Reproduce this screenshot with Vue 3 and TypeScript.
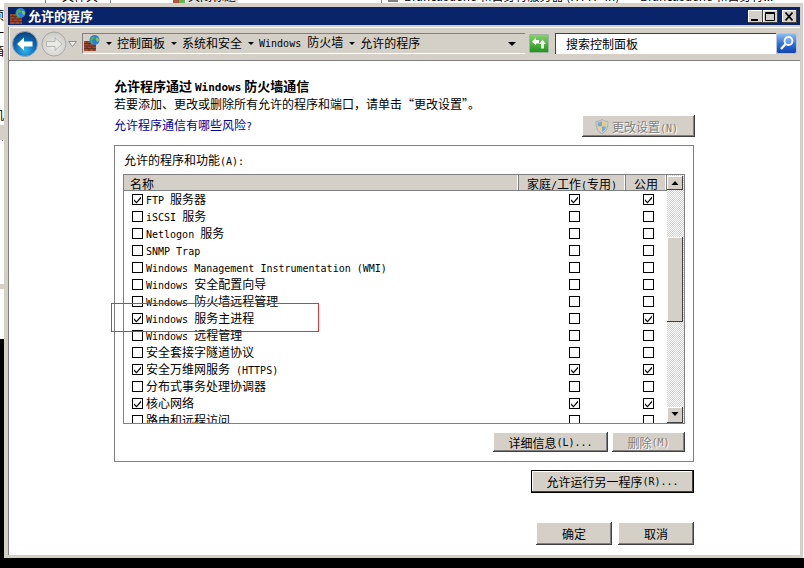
<script setup lang="ts">
import { h } from 'vue'

const T = (props: { t: string }) =>
  (props.t.match(/[\x00-\x7f]+|[^\x00-\x7f]+/g) || []).map((s) =>
    /^[\x00-\x7f]/.test(s) ? h('span', { class: 'lat' }, s) : s
  )
T.props = ['t']

const crumbs = ['控制面板', '系统和安全', 'Windows 防火墙', '允许的程序']

const rows: { name: string; on: boolean; home: boolean; pub: boolean }[] = [
  { name: 'FTP 服务器', on: true, home: true, pub: true },
  { name: 'iSCSI 服务', on: false, home: false, pub: false },
  { name: 'Netlogon 服务', on: false, home: false, pub: false },
  { name: 'SNMP Trap', on: false, home: false, pub: false },
  { name: 'Windows Management Instrumentation (WMI)', on: false, home: false, pub: false },
  { name: 'Windows 安全配置向导', on: false, home: false, pub: false },
  { name: 'Windows 防火墙远程管理', on: false, home: false, pub: false },
  { name: 'Windows 服务主进程', on: true, home: false, pub: true },
  { name: 'Windows 远程管理', on: false, home: false, pub: false },
  { name: '安全套接字隧道协议', on: false, home: false, pub: false },
  { name: '安全万维网服务 (HTTPS)', on: true, home: true, pub: true },
  { name: '分布式事务处理协调器', on: false, home: false, pub: false },
  { name: '核心网络', on: true, home: true, pub: true },
  { name: '路由和远程访问', on: false, home: false, pub: false }
]

const leftBits = [
  { top: 8, t: '项' },
  { top: 26, t: '一' },
  { top: 44, t: '箱' },
  { top: 66, t: '、' },
  { top: 108, t: '机' },
  { top: 128, t: '图' },
  { top: 148, t: 'i' }
]
</script>

<template>
  <div class="desktop">
    <div class="top-strip">
      <i class="sep s1"></i>
      <i class="sep s2"></i>
      <i class="sep s3"></i>
      <span class="frag f1">文件夹</span>
      <i class="mini-icon"></i>
      <span class="frag f2">关闭标题</span>
      <i class="mini-gray"></i>
      <span class="frag f3">Brancasdene 和自身行服务器 (HTTP-In)</span>
      <span class="frag f4">Brancasdene 和自身行...</span>
    </div>
    <span v-for="b in leftBits" :key="b.top" class="left-bit" :style="{ top: b.top + 'px' }">{{ b.t }}</span>
    <div class="left-band band-a"></div>
    <div class="left-band band-b"></div>
    <div class="black-left"></div>
    <div class="black-bottom"></div>

    <div class="window">
      <div class="titlebar">
        <svg class="app-icon" viewBox="0 0 16 16" width="16" height="16">
          <rect x="0" y="6" width="12" height="10" fill="#a04a30" />
          <path d="M0 8.500h12M0 11h12M0 13.500h12M3 6v2.500M8 6v2.500M5 8.500V11M10 8.500V11M3 11v2.500M8 11v2.500M5 13.500V16M10 13.500V16" stroke="#5e2a1a" stroke-width=".8" fill="none" />
          <circle cx="10.500" cy="5" r="5" fill="#2a7fd8" />
          <path d="M7 2.500c2-1.500 4-1 4 .5s-3 1-3 3 2 1.500 1.500 3.500C7 9 5.500 6 7 2.500z" fill="#4fb04a" />
          <path d="M12 3c1.500-.5 3 .5 3 2s-1 2-2 1.500-1.500-3-1-3.500z" fill="#7cc566" />
        </svg>
        <span class="title-text">允许的程序</span>
        <div class="win-btns">
          <button class="win-btn"><svg viewBox="0 0 15 13" width="15" height="13"><rect x="3" y="9" width="7" height="2" fill="#000" /></svg></button>
          <button class="win-btn"><svg viewBox="0 0 15 13" width="15" height="13"><path d="M2.500 2.500h9v8h-9z M2.500 3.500h9" fill="none" stroke="#000" /></svg></button>
          <button class="win-btn close"><svg viewBox="0 0 15 13" width="15" height="13"><path d="M3.500 2.500l7 8M10.500 2.500l-7 8" stroke="#000" stroke-width="1.800" fill="none" /></svg></button>
        </div>
      </div>

      <div class="toolbar">
        <div class="nav back">
          <svg viewBox="0 0 26 26" width="26" height="26">
            <defs>
              <radialGradient id="bg1" cx=".5" cy=".75" r=".75">
                <stop offset="0" stop-color="#35b6ee" />
                <stop offset=".55" stop-color="#0a6ab5" />
                <stop offset="1" stop-color="#0c3f78" />
              </radialGradient>
            </defs>
            <circle cx="13" cy="13" r="12.500" fill="url(#bg1)" stroke="#9aa7b3" />
            <path d="M5 13l7-6.500v4h8.500v5H12v4z" fill="#fff" />
          </svg>
        </div>
        <div class="nav fwd">
          <svg viewBox="0 0 26 26" width="26" height="26">
            <defs>
              <radialGradient id="bg2" cx=".5" cy=".6" r=".7">
                <stop offset="0" stop-color="#eeeeec" />
                <stop offset=".75" stop-color="#d0cfcb" />
                <stop offset="1" stop-color="#a5a5a3" />
              </radialGradient>
            </defs>
            <circle cx="13" cy="13" r="12" fill="url(#bg2)" stroke="#a9a9a6" />
            <path d="M21 13l-7-6.500v4H5.500v5H14v4z" fill="#e9e9e6" stroke="#b4b4b0" />
          </svg>
        </div>
        <svg class="nav-drop" viewBox="0 0 9 6" width="9" height="6"><path d="M.5.500h8L4.500 5.500z" fill="#eee" stroke="#8c8c8c" /></svg>

        <div class="address">
          <svg class="addr-icon" viewBox="0 0 16 16" width="16" height="16">
            <rect x="0" y="6" width="12" height="10" fill="#a04a30" />
            <path d="M0 8.500h12M0 11h12M0 13.500h12M3 6v2.500M8 6v2.500M5 8.500V11M10 8.500V11M3 11v2.500M8 11v2.500M5 13.500V16M10 13.500V16" stroke="#5e2a1a" stroke-width=".8" fill="none" />
            <circle cx="10.500" cy="5" r="5" fill="#2a7fd8" />
            <path d="M7 2.500c2-1.500 4-1 4 .5s-3 1-3 3 2 1.500 1.500 3.500C7 9 5.500 6 7 2.500z" fill="#4fb04a" />
            <path d="M12 3c1.500-.5 3 .5 3 2s-1 2-2 1.500-1.500-3-1-3.500z" fill="#7cc566" />
          </svg>
          <template v-for="c in crumbs" :key="c">
            <i class="tri"></i>
            <span class="crumb"><T :t="c" /></span>
          </template>
          <i class="tri last"></i>
        </div>

        <div class="refresh">
          <svg viewBox="0 0 20 19" width="20" height="19">
            <defs>
              <linearGradient id="gr" x1="0" y1="0" x2="0" y2="1">
                <stop offset="0" stop-color="#86d46e" />
                <stop offset="1" stop-color="#1f8f1c" />
              </linearGradient>
            </defs>
            <rect x=".5" y=".5" width="19" height="18" rx="1" fill="url(#gr)" stroke="#9fb59b" />
            <path d="M3 8l4-4.500v2.500h3v3.500H7V11z" fill="#fff" />
            <path d="M17 10l-3.500-4.500L10 10h2v4.500h3V10z" fill="#e8f3e6" />
          </svg>
        </div>

        <div class="search-box"><span>搜索控制面板</span></div>
        <div class="search-btn">
          <svg viewBox="0 0 21 21" width="21" height="21">
            <defs>
              <linearGradient id="sb" x1="0" y1="0" x2="0" y2="1">
                <stop offset="0" stop-color="#8fc0f2" />
                <stop offset=".5" stop-color="#2f74d8" />
                <stop offset="1" stop-color="#0f3fae" />
              </linearGradient>
            </defs>
            <rect x=".5" y=".5" width="20" height="20" rx="2" fill="url(#sb)" stroke="#b8c6d8" />
            <circle cx="12.500" cy="8" r="4" fill="#8cc0f0" fill-opacity=".5" stroke="#fff" stroke-width="1.800" />
            <path d="M9.500 11l-4.500 5" stroke="#fff" stroke-width="2.400" />
          </svg>
        </div>
      </div>

      <div class="content">
        <h1 class="heading">允许程序通过 <span class="lat-b">Windows</span> 防火墙通信</h1>
        <p class="desc">若要添加、更改或删除所有允许的程序和端口，请单击“更改设置”。</p>
        <div class="link-row">
          <a class="link"><T t="允许程序通信有哪些风险?" /></a>
          <button class="btn disabled settings">
            <svg viewBox="0 0 14 15" width="14" height="15">
              <path d="M7 .5c2 1.500 4 2 6 2 0 6-1.500 10-6 12-4.500-2-6-6-6-12 2 0 4-.5 6-2z" fill="#cfd6de" stroke="#a9adb2" />
              <path d="M7 2c1.500 1 3 1.500 4.500 1.500 0 1.500-.1 2.800-.3 4H7z" fill="#e7cf7c" />
              <path d="M7 7.500H2.800c-.2-1.200-.3-2.500-.3-4C4 3.500 5.500 3 7 2z" fill="#7ea7d4" />
              <path d="M7 7.500h4.200c-.6 2.700-1.900 4.500-4.200 5.500z" fill="#7ea7d4" />
              <path d="M7 7.500v5.500c-2.300-1-3.600-2.800-4.200-5.500z" fill="#e7cf7c" />
            </svg>
            <span><T t="更改设置(N)" /></span>
          </button>
        </div>

        <section class="group">
          <div class="group-label"><T t="允许的程序和功能(A):" /></div>
          <div class="list">
            <div class="list-main">
              <div class="list-head">
                <div class="hc c-name">名称</div>
                <div class="hc c-home"><T t="家庭/工作(专用)" /></div>
                <div class="hc c-pub">公用</div>
              </div>
              <div v-for="r in rows" :key="r.name" class="row">
                <div class="c-name cell-name">
                  <i class="cb"><svg v-if="r.on" viewBox="0 0 9 9" width="9" height="9"><path d="M1 4.200l2.500 2.600L8 1.500v2L3.500 8.500 1 6z" fill="#000" /></svg></i>
                  <span class="row-text"><T :t="r.name" /></span>
                </div>
                <div class="c-home cell-c"><i class="cb"><svg v-if="r.home" viewBox="0 0 9 9" width="9" height="9"><path d="M1 4.200l2.500 2.600L8 1.500v2L3.500 8.500 1 6z" fill="#000" /></svg></i></div>
                <div class="c-pub cell-c"><i class="cb"><svg v-if="r.pub" viewBox="0 0 9 9" width="9" height="9"><path d="M1 4.200l2.500 2.600L8 1.500v2L3.500 8.500 1 6z" fill="#000" /></svg></i></div>
              </div>
            </div>
            <div class="scrollbar">
              <div class="sb-btn"><svg viewBox="0 0 16 14" width="16" height="14"><path d="M4.500 9h7L8 5z" fill="#000" /></svg></div>
              <div class="sb-thumb"></div>
              <div class="sb-btn down"><svg viewBox="0 0 16 14" width="16" height="14"><path d="M4.500 5h7L8 9z" fill="#000" /></svg></div>
            </div>
          </div>
          <div class="list-actions">
            <button class="btn details"><T t="详细信息(L)..." /></button>
            <button class="btn disabled remove"><T t="删除(M)" /></button>
          </div>
        </section>

        <div class="another-row">
          <button class="btn default another"><T t="允许运行另一程序(R)..." /></button>
        </div>

        <div class="dialog-row">
          <button class="btn ok">确定</button>
          <button class="btn ok">取消</button>
        </div>
      </div>
    </div>

    <div class="red-box"></div>
  </div>
</template>

<style scoped>
.desktop {
  position: relative;
  width: 804px;
  height: 568px;
  overflow: hidden;
  background: #fff;
  font-family: "Noto Sans CJK SC", "Liberation Sans", sans-serif;
  font-size: 12px;
  color: #000;
}
.top-strip {
  position: absolute;
  left: 0;
  top: 0;
  width: 804px;
  height: 3px;
  overflow: hidden;
  background: #fff;
}
.sep {
  position: absolute;
  top: 0;
  width: 1px;
  height: 3px;
  background: #808080;
}
.s1 { left: 45px; }
.s2 { left: 110px; }
.s3 { left: 381px; }
.mini-icon {
  position: absolute;
  left: 173px;
  top: 0;
  width: 12px;
  height: 3px;
  background: linear-gradient(90deg, #b5533c 50%, #5db85a 50%);
}
.mini-gray {
  position: absolute;
  left: 388px;
  top: 0;
  width: 10px;
  height: 2px;
  background: #808080;
}
.frag {
  position: absolute;
  top: -11px;
  line-height: 14px;
  white-space: nowrap;
}
.f1 { left: 62px; }
.f2 { left: 186px; padding: 0 2px; background: #e4e2dd; }
.f3 { left: 404px; }
.f4 { left: 640px; }
.left-bit {
  position: absolute;
  left: -8px;
  width: 12px;
  line-height: 14px;
  overflow: hidden;
  font-size: 12px;
}
.left-band {
  position: absolute;
  left: 0;
  width: 4px;
  background: #d4d0c8;
}
.band-a { top: 125px; height: 15px; }
.band-b { top: 284px; height: 5px; }
.black-left {
  position: absolute;
  left: 0;
  top: 339px;
  width: 4px;
  height: 229px;
  background: #000;
}
.black-bottom {
  position: absolute;
  left: 0;
  top: 558px;
  width: 804px;
  height: 10px;
  background: #000;
}
.window {
  position: absolute;
  left: 4px;
  top: 3px;
  width: 799px;
  height: 555px;
  box-sizing: border-box;
  padding: 4px 3px 3px 4px;
  background: #d4d0c8;
  display: flex;
  flex-direction: column;
}
.titlebar {
  height: 18px;
  background: #0a246a;
  display: flex;
  align-items: center;
  flex: none;
}
.app-icon {
  margin-left: 2px;
  flex: none;
}
.title-text {
  margin-left: 2px;
  color: #fff;
  font-size: 13px;
  font-weight: 700;
  line-height: 18px;
}
.win-btns {
  margin-left: auto;
  margin-right: 3px;
  display: flex;
}
.win-btn {
  width: 15px;
  height: 13px;
  padding: 0;
  border: 0;
  background: #d4d0c8;
  box-shadow: inset -1px -1px 0 #404040, inset 1px 1px 0 #fff;
  display: block;
}
.win-btn svg {
  display: block;
}
.win-btn.close {
  margin-left: 4px;
}
.toolbar {
  height: 33px;
  margin-top: 2px;
  flex: none;
  display: flex;
  align-items: center;
  border-bottom: 1px solid #808080;
  border-left: 1px solid #808080;
  background: #d4d0c8;
  box-shadow: inset 1px 1px 0 #fff;
}
.nav {
  width: 26px;
  height: 26px;
  flex: none;
}
.nav svg {
  display: block;
}
.back {
  margin-left: 3px;
}
.fwd {
  margin-left: 3px;
}
.nav-drop {
  margin-left: 1px;
  flex: none;
}
.address {
  margin-left: 5px;
  width: 443px;
  height: 21px;
  flex: none;
  display: flex;
  align-items: center;
  box-sizing: border-box;
  border-left: 1px solid #808080;
  border-top: 1px solid #808080;
  border-bottom: 1px solid #fff;
  white-space: nowrap;
}
.addr-icon {
  margin-left: 1px;
  margin-top: -2px;
  flex: none;
}
.tri {
  width: 0;
  height: 0;
  border-left: 3px solid transparent;
  border-right: 3px solid transparent;
  border-top: 3px solid #000;
  margin-left: 6px;
  flex: none;
}
.tri.last {
  margin-left: 88px;
  border-left-width: 4px;
  border-right-width: 4px;
  border-top-width: 4px;
}
.crumb {
  margin-left: 5px;
  margin-top: -2px;
  line-height: 16px;
}
.refresh {
  margin-left: 4px;
  width: 20px;
  height: 19px;
  flex: none;
}
.refresh svg,
.search-btn svg {
  display: block;
}
.search-box {
  margin-left: 6px;
  width: 221px;
  height: 21px;
  box-sizing: border-box;
  flex: none;
  background: #fff;
  border-left: 1px solid #404040;
  border-top: 1px solid #404040;
  padding-left: 10px;
  line-height: 19px;
}
.search-btn {
  width: 21px;
  height: 21px;
  flex: none;
}
.content {
  flex: 1;
  min-height: 0;
  background: #fff;
  box-sizing: border-box;
  padding: 18px 106px 0 105px;
  border-left: 1px solid #808080;
}
.heading {
  margin: 0;
  height: 14px;
  font-size: 13px;
  font-weight: 700;
  line-height: 14px;
  white-space: nowrap;
}
.lat-b {
  font-family: "DejaVu Sans Mono", monospace;
  font-size: 11px;
  font-weight: 700;
}
.desc {
  margin: 4px 0 0;
  height: 14px;
  line-height: 14px;
  white-space: nowrap;
}
.link-row {
  margin-top: 4px;
  height: 22px;
  display: flex;
  align-items: center;
  justify-content: space-between;
  margin-right: -1px;
}
.link {
  color: #000099;
  line-height: 14px;
}
.btn {
  display: flex;
  align-items: center;
  justify-content: center;
  padding: 0;
  border: 0;
  background: #d4d0c8;
  box-shadow: inset -1px -1px 0 #404040, inset 1px 1px 0 #fff, inset -2px -2px 0 #808080;
  font-family: inherit;
  font-size: 12px;
  color: #000;
  white-space: nowrap;
  box-sizing: border-box;
}
.btn.disabled {
  color: #808080;
  text-shadow: 1px 1px 0 #fff;
}
.settings {
  width: 113px;
  height: 22px;
  gap: 3px;
  padding-right: 4px;
}
.group {
  margin-top: 8px;
  width: 580px;
  height: 317px;
  box-sizing: border-box;
  border: 1px solid #808080;
  padding: 7px 8px 0 8px;
}
.group-label {
  margin-left: 1px;
  height: 14px;
  line-height: 14px;
}
.list {
  margin-top: 7px;
  height: 250px;
  box-sizing: border-box;
  border: 1px solid #808080;
  display: flex;
  overflow: hidden;
}
.list-main {
  flex: 1;
  min-width: 0;
}
.list-head {
  height: 15px;
  display: flex;
  background: #d4d0c8;
  border-bottom: 1px solid #808080;
  overflow: hidden;
}
.hc {
  height: 15px;
  line-height: 17px;
  box-sizing: border-box;
  white-space: nowrap;
  border-right: 1px solid #808080;
  box-shadow: inset -1px 0 0 #fff;
}
.c-name {
  width: 395px;
  flex: none;
}
.c-home {
  width: 107px;
  flex: none;
}
.c-pub {
  width: 41px;
  flex: none;
}
.hc.c-name {
  padding-left: 6px;
}
.hc.c-home,
.hc.c-pub {
  text-align: center;
}
.row {
  height: 17px;
  display: flex;
  align-items: center;
}
.cell-name {
  display: flex;
  align-items: center;
  padding-left: 8px;
  box-sizing: border-box;
}
.row-text {
  margin-left: 3px;
  margin-top: -2px;
  height: 14px;
  line-height: 14px;
  white-space: nowrap;
}
.cell-c {
  display: flex;
  justify-content: center;
  box-sizing: border-box;
  padding-left: 4px;
}
.cb {
  width: 11px;
  height: 11px;
  box-sizing: border-box;
  flex: none;
  border: 1px solid #000;
  background: #fff;
  display: block;
}
.cb svg {
  display: block;
}
.scrollbar {
  width: 17px;
  flex: none;
  display: flex;
  flex-direction: column;
  background-color: #fff;
  background-image: repeating-conic-gradient(#d4d0c8 0 25%, #fff 0 50%);
  background-size: 2px 2px;
}
.sb-btn {
  width: 16px;
  height: 14px;
  flex: none;
  background: #d4d0c8;
  box-shadow: inset -1px -1px 0 #404040, inset 1px 1px 0 #fff;
  margin-top: 1px;
}
.sb-btn svg {
  display: block;
}
.sb-btn.down {
  margin-top: auto;
  height: 16px;
}
.sb-thumb {
  width: 16px;
  height: 85px;
  margin-top: 47px;
  flex: none;
  background: #d4d0c8;
  box-shadow: inset -1px -1px 0 #404040, inset 1px 1px 0 #fff;
}
.list-actions {
  margin-top: 8px;
  display: flex;
  justify-content: flex-end;
  gap: 4px;
}
.details {
  width: 115px;
  height: 20px;
}
.remove {
  width: 73px;
  height: 20px;
}
.another-row {
  margin-top: 8px;
  width: 580px;
  display: flex;
  justify-content: flex-end;
}
.another {
  width: 163px;
  height: 23px;
}
.btn.default {
  box-shadow: inset 0 0 0 1px #000, inset -2px -2px 0 #404040, inset 2px 2px 0 #fff;
}
.dialog-row {
  margin-top: 29px;
  width: 580px;
  display: flex;
  justify-content: flex-end;
  gap: 6px;
}
.ok {
  width: 76px;
  height: 23px;
}
.red-box {
  position: absolute;
  left: 111px;
  top: 303px;
  width: 208px;
  height: 29px;
  box-sizing: border-box;
  border: 1px solid #f03030;
  pointer-events: none;
}
</style>

<style>
.lat {
  font-family: "DejaVu Sans Mono", monospace;
  font-size: 10px;
}
</style>
